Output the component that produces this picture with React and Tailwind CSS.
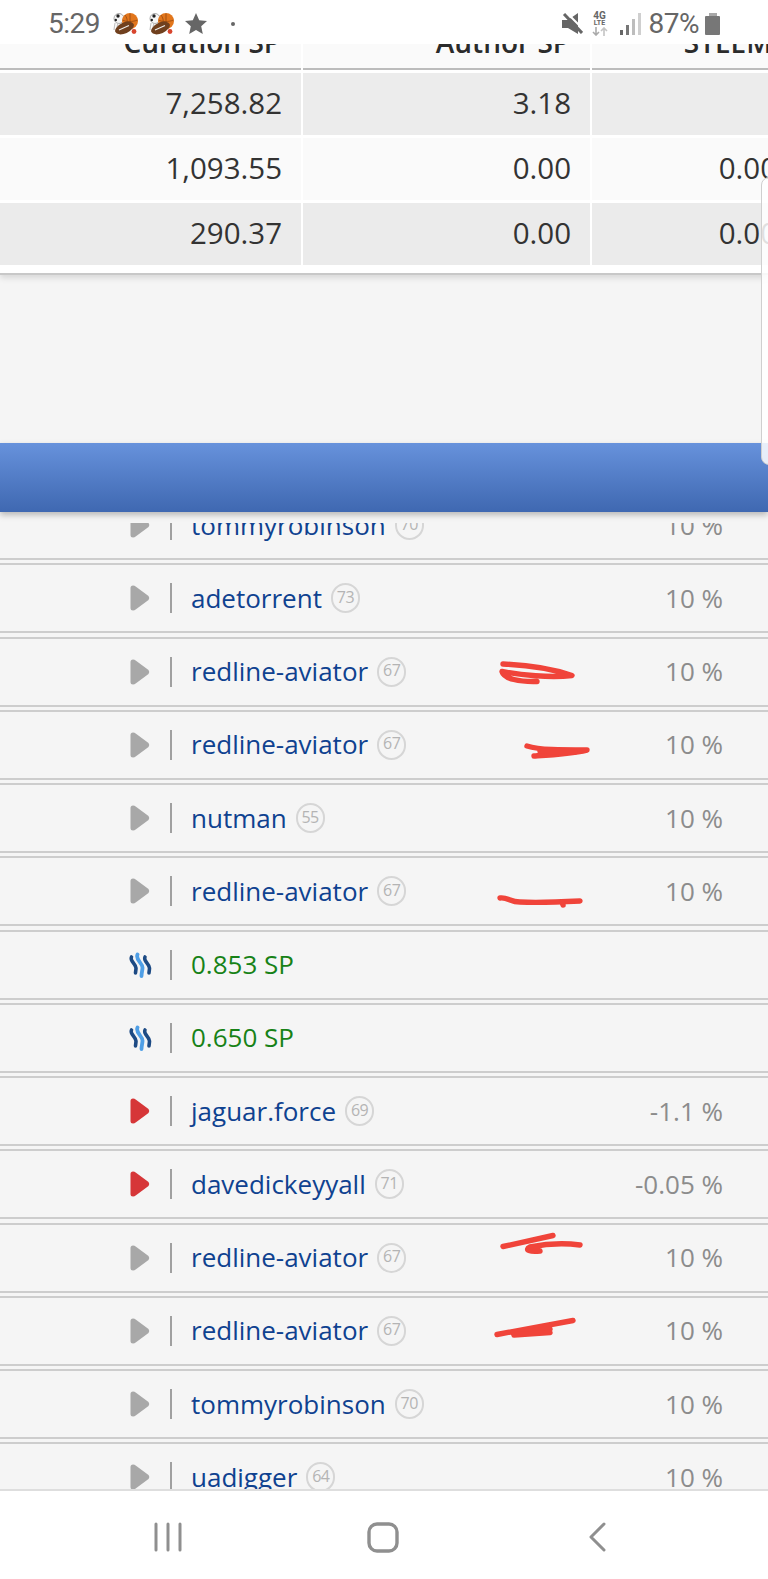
import React from "react";

const rows = [
  { type: "vote", name: "tommyrobinson", rep: 70, pct: "10 %" },
  { type: "vote", name: "adetorrent", rep: 73, pct: "10 %" },
  {
    type: "vote",
    name: "redline-aviator",
    rep: 67,
    pct: "10 %",
    scribble: ["M23 25 C50 26,70 29,92 36.5 C70 39,40 36,22 32.5 C24 40,40 43,57 42.5"],
  },
  {
    type: "vote",
    name: "redline-aviator",
    rep: 67,
    pct: "10 %",
    scribble: ["M47 34 C60 38,80 38,107 38 C90 42,70 43,54 44", "M60 39 L95 40"],
  },
  { type: "vote", name: "nutman", rep: 55, pct: "10 %" },
  {
    type: "vote",
    name: "redline-aviator",
    rep: 67,
    pct: "10 %",
    scribble: ["M20 40 C28 39,30 44,40 44 C60 45,80 44,100 43", "M82 44 L83 47"],
  },
  { type: "sp", amount: "0.853 SP" },
  { type: "sp", amount: "0.650 SP" },
  { type: "down", name: "jaguar.force", rep: 69, pct: "-1.1 %" },
  { type: "down", name: "davedickeyyall", rep: 71, pct: "-0.05 %" },
  {
    type: "vote",
    name: "redline-aviator",
    rep: 67,
    pct: "10 %",
    scribble: ["M23 21.5 L73 10.5", "M100 20 C85 18,65 19,50 22 C44 25,50 27,60 26"],
  },
  {
    type: "vote",
    name: "redline-aviator",
    rep: 67,
    pct: "10 %",
    scribble: ["M17 36.5 L93 22.5", "M33 35 L70 31", "M34 37 L70 34.5"],
  },
  { type: "vote", name: "tommyrobinson", rep: 70, pct: "10 %" },
  { type: "vote", name: "uadigger", rep: 64, pct: "10 %" },
];

const tableRows = [
  { bg: "bg-[#ececec]", curation: "7,258.82", author: "3.18", steem: "" },
  { bg: "bg-[#fafafa]", curation: "1,093.55", author: "0.00", steem: "0.00" },
  { bg: "bg-[#ebebeb]", curation: "290.37", author: "0.00", steem: "0.00" },
];

function SportsEmoji() {
  return (
    <svg width="25" height="22" viewBox="0 0 25 22">
      <circle cx="6" cy="5.5" r="5" fill="#f6f6f6" stroke="#777" strokeWidth="0.6" />
      <circle cx="5" cy="3" r="1.7" fill="#222" />
      <circle cx="2.8" cy="7" r="1.2" fill="#222" />
      <path d="M2 10 L1 17 M5 10 L4 14" stroke="#c4c4c4" strokeWidth="1.2" />
      <circle cx="17" cy="8" r="8" fill="#e2761c" />
      <path d="M9.5 7 C13 9,20 9,24.5 7 M17 0.5 L17 15 M12 2 C15 6,15 11,12 14" stroke="#8a4210" strokeWidth="0.7" fill="none" />
      <ellipse cx="11.5" cy="15" rx="10" ry="5.4" transform="rotate(-24 11.5 15)" fill="#70401e" />
      <path d="M6 17 L16 12.5" stroke="#eeeeee" strokeWidth="1.1" />
      <circle cx="21" cy="18.5" r="2.4" fill="#d8452e" />
    </svg>
  );
}

function StatusBar() {
  return (
    <div className="relative z-10 flex h-[44px] shrink-0 items-center bg-white pl-[48px] pr-[48px] pt-[3px] font-['Roboto',sans-serif] text-[#666666]">
      <span className="text-[28px] leading-none tracking-[-0.5px]">5:29</span>
      <div className="ml-[13px] flex items-center gap-[11px]">
        <SportsEmoji />
        <SportsEmoji />
      </div>
      <svg className="ml-[11px]" width="22" height="21" viewBox="0 0 22 21">
        <path d="M11 0 L14.2 7.2 L22 8 L16.2 13.2 L17.8 21 L11 17 L4.2 21 L5.8 13.2 L0 8 L7.8 7.2 Z" fill="#666666" />
      </svg>
      <div className="ml-[24px] h-[4px] w-[4px] rounded-full bg-[#666666]" />

      <div className="ml-auto flex items-center">
        <svg width="21" height="21" viewBox="0 0 21 21">
          <path d="M0 7 L6 7 L16 0 L16 21 L6 15 L0 15 Z" fill="#666666" />
          <path d="M5 0 L22 17" stroke="#ffffff" strokeWidth="2" />
          <path d="M2 1 L20 20" stroke="#666666" strokeWidth="3" />
        </svg>
        <div className="ml-[9px] flex w-[16px] flex-col items-center">
          <span className="text-[10px] font-bold leading-[8px]">4G</span>
          <span className="text-[7px] font-bold leading-[7px]">LTE</span>
          <svg width="16" height="9" viewBox="0 0 16 9">
            <path d="M4 0 L4 8 M1 5 L4 8 L7 5" stroke="#aaaaaa" strokeWidth="1.6" fill="none" />
            <path d="M12 9 L12 1 M9 4 L12 1 L15 4" stroke="#c4c4c4" strokeWidth="1.6" fill="none" />
          </svg>
        </div>
        <svg className="ml-[12px]" width="21" height="22" viewBox="0 0 21 22">
          <rect x="0" y="17" width="3" height="5" fill="#666666" />
          <rect x="6" y="12" width="3" height="10" fill="#777777" />
          <rect x="12" y="6" width="3" height="16" fill="#bdbdbd" />
          <rect x="18" y="0" width="3" height="22" fill="#cfcfcf" />
        </svg>
        <span className="ml-[8px] text-[28px] leading-none tracking-[-0.5px]">87%</span>
        <div className="ml-[6px] flex w-[15px] flex-col items-center">
          <div className="h-[3px] w-[8px] bg-[#a8a8a8]" />
          <div className="h-[19px] w-[15px] rounded-[1px] bg-[#777777]" />
        </div>
      </div>
    </div>
  );
}

function HeaderCell({ children, className }) {
  return (
    <div className={`flex h-[26px] items-end justify-end overflow-hidden border-b-2 border-[#bcbcbc] bg-[#fafafa] pb-[11px] ${className}`}>
      <span className="whitespace-nowrap text-[28px] font-semibold leading-[30px] text-[#2b2b2b]">{children}</span>
    </div>
  );
}

function EarningsTable() {
  return (
    <div className="relative shrink-0 overflow-hidden border-b-2 border-[#c8c8c8] bg-white pb-[8px] shadow-[0_3px_6px_rgba(0,0,0,0.12)] font-['Open_Sans',sans-serif]">
      <div className="grid w-[800px] grid-cols-[301px_287px_204px] gap-x-[2px]">
        <HeaderCell className="pr-[20px]">Curation SP</HeaderCell>
        <HeaderCell className="pr-[20px]">Author SP</HeaderCell>
        <HeaderCell className="pr-[24px]">STEEM</HeaderCell>
      </div>
      <div className="mt-[3px] flex w-[800px] flex-col gap-y-[3px]">
        {tableRows.map((row) => (
          <div key={row.curation} className="grid h-[62px] grid-cols-[301px_287px_204px] gap-x-[2px] text-[29.5px] text-[#333333]">
            <div className={`flex items-center justify-end pb-[2px] pr-[19px] ${row.bg}`}>{row.curation}</div>
            <div className={`flex items-center justify-end pb-[2px] pr-[19px] ${row.bg}`}>{row.author}</div>
            <div className={`flex items-center justify-end pb-[2px] pr-[19px] ${row.bg}`}>{row.steem}</div>
          </div>
        ))}
      </div>
    </div>
  );
}

function PlayIcon({ color }) {
  return (
    <svg width="20" height="26" viewBox="0 0 20 26">
      <path d="M3 0.5 Q4.5 0.5 6 1.8 L18.5 11 Q20 13 18.5 15 L6 24.2 Q4.5 25.5 3 25.5 Q0.5 25.5 0.5 23 L0.5 3 Q0.5 0.5 3 0.5 Z" fill={color} />
    </svg>
  );
}

function SteemIcon() {
  return (
    <svg width="25" height="26" viewBox="0 0 25 26" fill="none" strokeLinecap="round">
      <path d="M4.5 5 C2.5 9,9 12,9 16 C9 18,8.5 20,8.5 21" stroke="#1c4a84" strokeWidth="3.6" />
      <path d="M18 5 C16 9,22.5 12,22.5 16 C22.5 18,22 20,22 21" stroke="#1c4a84" strokeWidth="3.6" />
      <path d="M10.5 2.5 C8 8,16 11,15.5 16 C15.3 19,14.5 21,14.5 24" stroke="#4f9fe6" strokeWidth="3.8" />
    </svg>
  );
}

function Scribble({ paths }) {
  return (
    <svg className="absolute left-[480px] top-0" width="120" height="70" viewBox="0 0 120 70" fill="none">
      {paths.map((d) => (
        <path key={d} d={d} stroke="#f0443a" strokeWidth="5.4" strokeLinecap="round" strokeLinejoin="round" />
      ))}
    </svg>
  );
}

function Row({ row }) {
  return (
    <div className="relative flex h-[70px] shrink-0 items-center border-y-2 border-[#cdcdcd] bg-[#f5f5f5] pl-[127px] pr-[45px] text-[26px]">
      <div className="flex w-[25px] justify-center">
        {row.type === "sp" ? <SteemIcon /> : <PlayIcon color={row.type === "down" ? "#d63638" : "#a8a8a8"} />}
      </div>
      <div className="ml-[18px] h-[30px] w-[2px] bg-[#a0a0a0]" />
      {row.type === "sp" ? (
        <span className="ml-[19px] text-[#178217]">{row.amount}</span>
      ) : (
        <>
          <span className="ml-[19px] text-[#0f4290]">{row.name}</span>
          <span className="ml-[9px] flex h-[30px] w-[29px] items-center justify-center rounded-full border-2 border-[#d6d6d6] pb-[3px] text-[16px] tracking-[-0.5px] text-[#b4b4b4]">
            {row.rep}
          </span>
          <span className="ml-auto text-[#8c8c8c]">{row.pct}</span>
        </>
      )}
      {row.scribble && <Scribble paths={row.scribble} />}
    </div>
  );
}

function NavBar() {
  return (
    <div className="relative z-10 flex h-[90px] shrink-0 items-start border-t-2 border-[#dedede] bg-white pl-[154px] pt-[31px]">
      <svg width="28" height="30" viewBox="0 0 28 30" stroke="#8f8f8f" strokeWidth="3" strokeLinecap="round">
        <path d="M2 2 L2 28 M14 2 L14 28 M26 2 L26 28" />
      </svg>
      <svg className="ml-[185px]" width="32" height="31" viewBox="0 0 32 31" fill="none" stroke="#8f8f8f" strokeWidth="3.4">
        <rect x="2" y="2" width="28" height="27" rx="8" />
      </svg>
      <svg className="ml-[189px]" width="19" height="30" viewBox="0 0 19 30" fill="none" stroke="#8f8f8f" strokeWidth="3" strokeLinecap="round" strokeLinejoin="round">
        <path d="M16 2 L3 15 L16 28" />
      </svg>
    </div>
  );
}

export default function App() {
  return (
    <div className="relative flex h-[1579px] w-[768px] flex-col overflow-hidden bg-[#f5f5f5] font-['Open_Sans',sans-serif]">
      <StatusBar />
      <EarningsTable />

      {/* sticky blue bar */}
      <div className="relative z-10 mt-[168px] h-[69px] shrink-0 bg-gradient-to-b from-[#6792dc] to-[#3f68b1] shadow-[0_3px_6px_rgba(0,0,0,0.25)]" />
      <div className="h-[11px] shrink-0 bg-[#f5f5f5]" />

      {/* votes list, first row is cut off under the bar */}
      <div className="min-h-0 flex-1 overflow-hidden">
        <div className="-mt-[33px] flex flex-col gap-y-[3.25px]">
          {rows.map((row, idx) => (
            <Row key={idx} row={row} />
          ))}
        </div>
      </div>

      <NavBar />

      {/* side panel peeking in from the right */}
      <div className="absolute left-[761px] top-[177px] z-20 h-[288px] w-[12px] rounded-l-[8px] border border-[#cfcfcf] bg-white/85" />
    </div>
  );
}
